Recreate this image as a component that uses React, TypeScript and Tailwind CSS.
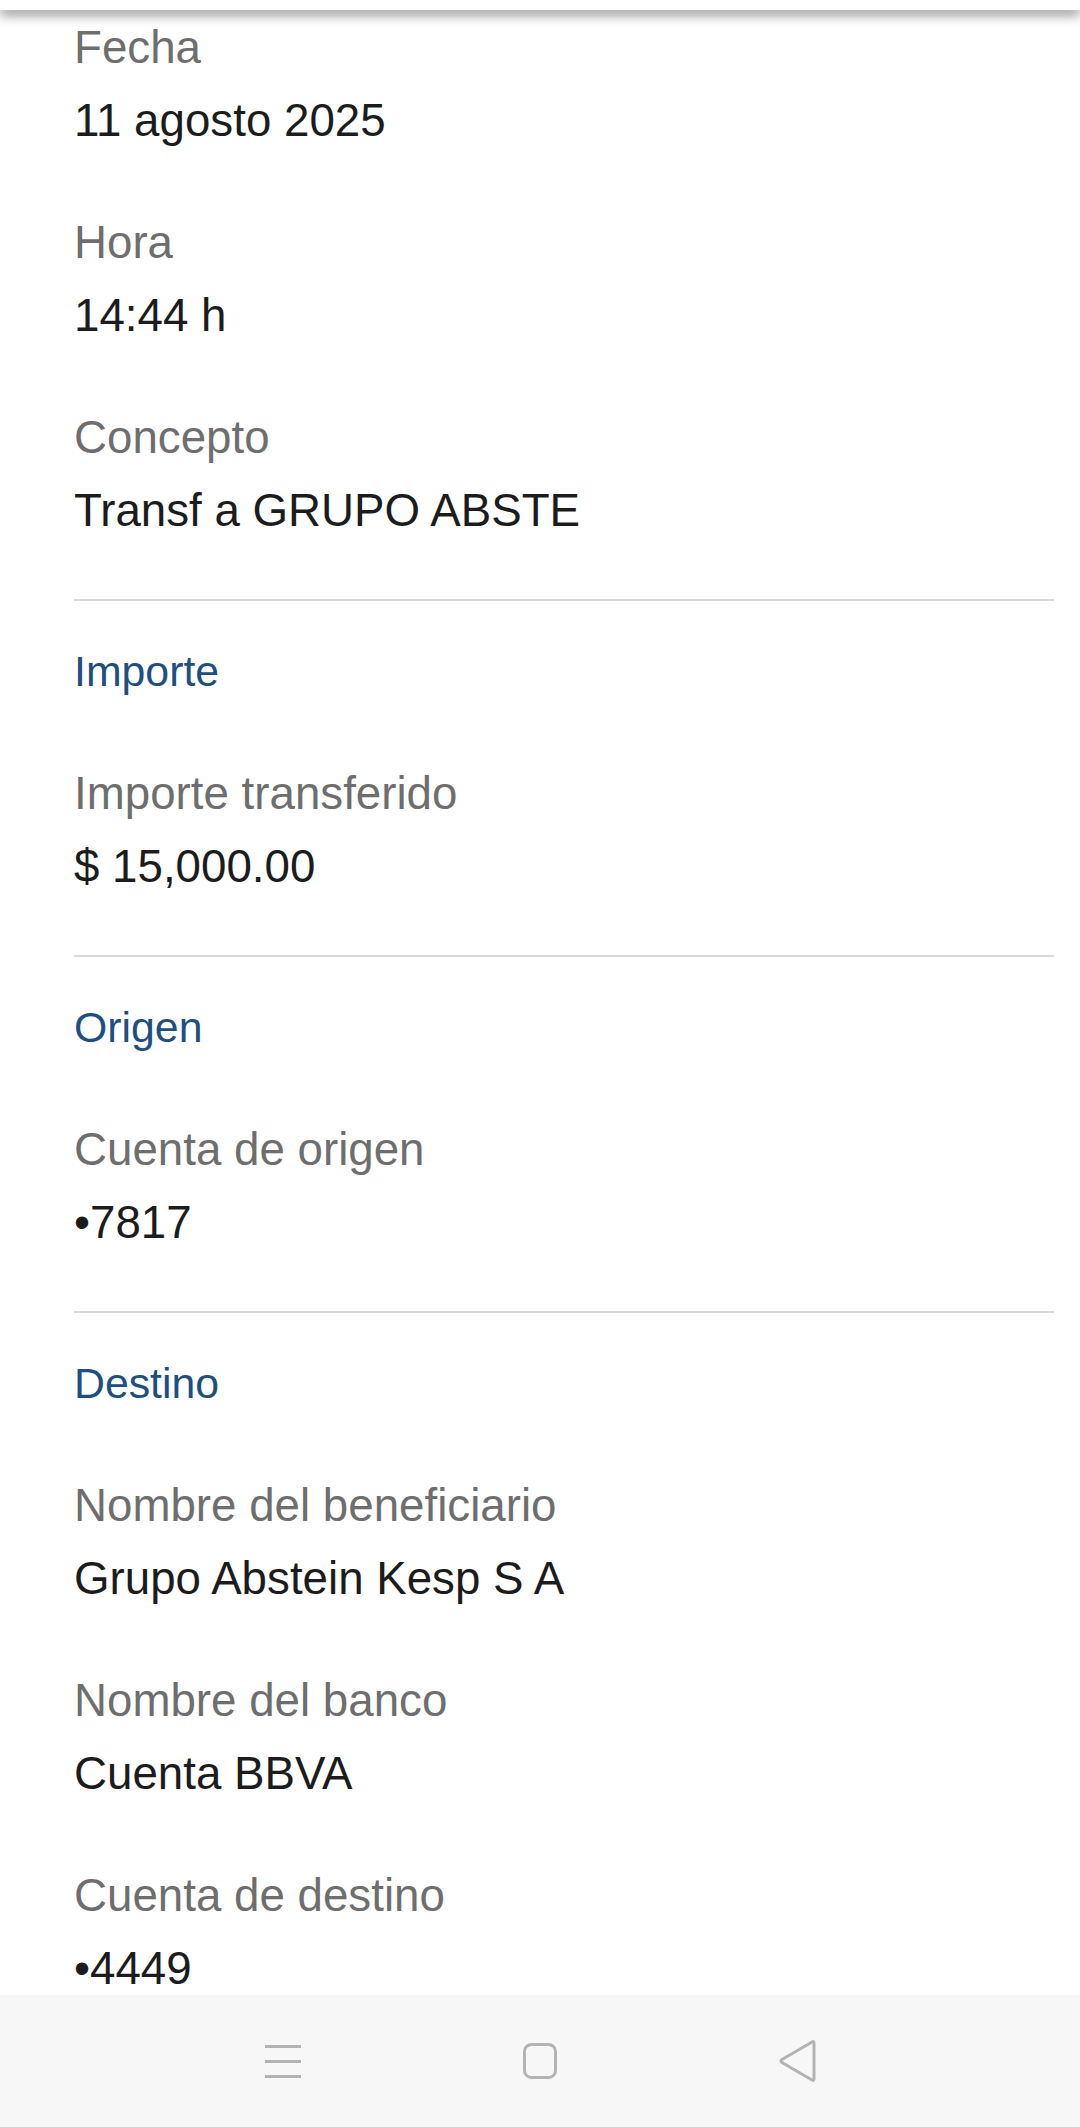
import React from "react";

const font = { fontFamily: '"Liberation Sans", Arial, sans-serif' };

function Field({ label, value }: { label: string; value: string }) {
  return (
    <div className="flex flex-col">
      <p className="text-[45.7px] leading-[73px] text-[#6e6e6e]">{label}</p>
      <p className="text-[45.7px] leading-[73px] text-[#1c1c1c]">{value}</p>
    </div>
  );
}

function Section({
  title,
  fields,
}: {
  title: string;
  fields: { label: string; value: string }[];
}) {
  return (
    <div className="flex flex-col gap-[49px] mt-[34px]">
      <p className="text-[42.8px] leading-[73px] text-[#1e4f80]">{title}</p>
      {fields.map((f) => (
        <Field key={f.label} label={f.label} value={f.value} />
      ))}
    </div>
  );
}

function Divider() {
  return <div className="h-[2px] bg-[#d9d9d9] mt-[52px]" />;
}

export default function App() {
  return (
    <div
      className="w-[1080px] h-[2127px] bg-white flex flex-col overflow-hidden"
      style={font}
    >
      <div className="h-[10px] shrink-0 bg-white relative z-10 shadow-[0_5px_12px_rgba(0,0,0,0.45)]" />

      <main className="flex-1 overflow-hidden pl-[74px] pr-[26px] pt-[1px]">
        <div className="flex flex-col gap-[49px]">
          <Field label="Fecha" value="11 agosto 2025" />
          <Field label="Hora" value="14:44 h" />
          <Field label="Concepto" value="Transf a GRUPO ABSTE" />
        </div>

        <Divider />
        <Section
          title="Importe"
          fields={[{ label: "Importe transferido", value: "$ 15,000.00" }]}
        />

        <Divider />
        <Section
          title="Origen"
          fields={[{ label: "Cuenta de origen", value: "•7817" }]}
        />

        <Divider />
        <Section
          title="Destino"
          fields={[
            { label: "Nombre del beneficiario", value: "Grupo Abstein Kesp S A" },
            { label: "Nombre del banco", value: "Cuenta BBVA" },
            { label: "Cuenta de destino", value: "•4449" },
          ]}
        />
      </main>

      <nav className="h-[132px] shrink-0 bg-[#f7f7f7] flex items-center justify-center gap-[217px]">
        <div className="w-[40px] flex justify-center">
          <svg width="36" height="33" viewBox="0 0 36 33" fill="none" stroke="#b3b3b3" strokeWidth="3">
            <line x1="0" y1="1.5" x2="36" y2="1.5" />
            <line x1="0" y1="16.5" x2="36" y2="16.5" />
            <line x1="0" y1="31.5" x2="36" y2="31.5" />
          </svg>
        </div>
        <div className="w-[40px] flex justify-center">
          <svg width="34" height="36" viewBox="0 0 34 36" fill="none" stroke="#b3b3b3" strokeWidth="3">
            <rect x="1.5" y="1.5" width="31" height="33" rx="7" />
          </svg>
        </div>
        <div className="w-[40px] flex justify-center">
          <svg width="38" height="44" viewBox="0 0 38 44" fill="none" stroke="#b3b3b3" strokeWidth="3" strokeLinejoin="round">
            <path d="M34 3 C35.5 2 36 3 36 4.5 L36 39.5 C36 41 35.5 42 34 41 L4 23.5 C2.5 22.5 2.5 21.5 4 20.5 Z" />
          </svg>
        </div>
      </nav>
    </div>
  );
}
